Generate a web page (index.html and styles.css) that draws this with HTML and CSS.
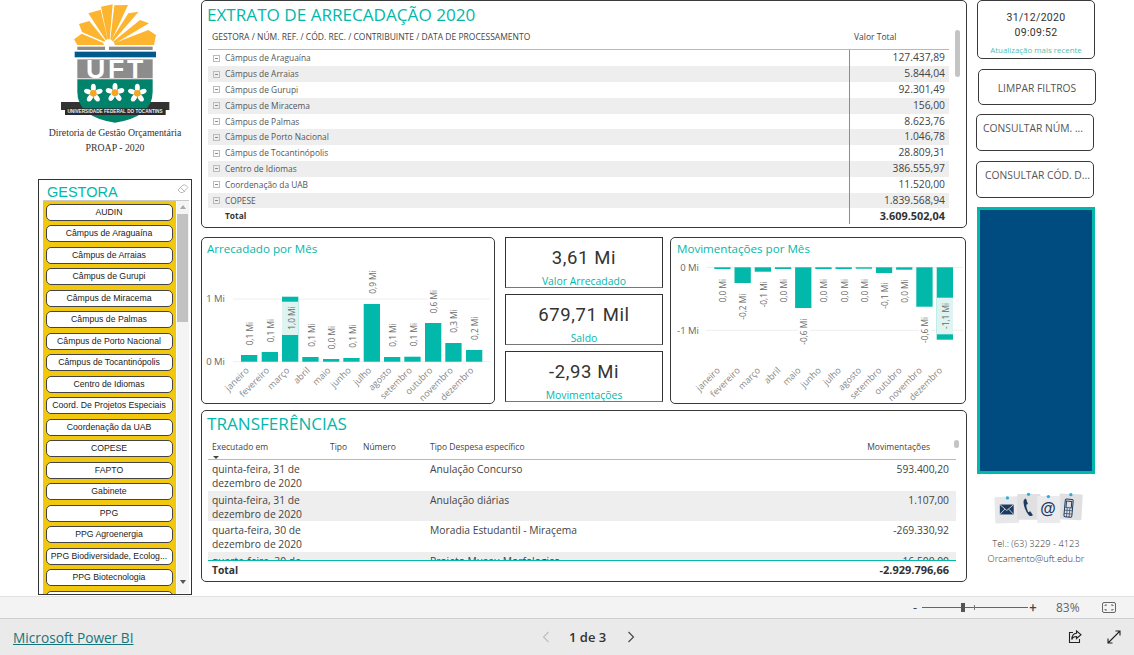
FILE: index.html
```html
<!DOCTYPE html>
<html lang="pt-BR">
<head>
<meta charset="utf-8">
<title>Extrato de Arrecadação 2020</title>
<link rel="stylesheet" href="styles.css">
</head>
<body>
<div class="canvas">
  <aside class="left">
    <svg class="logo" viewBox="180 0 330 372" aria-label="UFT">
      <g fill="#fdb52f">
        <polygon points="222,118 245,101 309,128 312,135 232,135"/>
        <polygon points="237,72 268,63 316,122 312,125 246,96"/>
        <polygon points="265,40 302,29 323,118 317,120"/>
        <polygon points="303,20 338,13 329,118 323,118"/>
        <polygon points="343,16 384,15 335,120 331,118"/>
        <polygon points="385,40 416,35 339,124 334,120"/>
        <polygon points="420,60 447,70 346,130 339,125"/>
        <polygon points="445,90 468,105 462,135 345,135 342,130"/>
      </g>
      <rect x="232" y="140" width="83" height="10" fill="#8c8c8c"/>
      <rect x="327" y="140" width="131" height="10" fill="#8c8c8c"/>
      <rect x="224" y="155" width="244" height="17" fill="#005a8c"/>
      <rect x="232" y="178" width="226" height="57" fill="#8c8c8c"/>
      <text class="logo-uft" x="348" y="235">UFT</text>
      <rect x="183" y="306" width="325" height="24" fill="#333"/>
      <path d="M232 238H458V275Q458 350 345 368Q232 350 232 275Z" fill="#00826b"/>
      <g fill="#fff">
        <g transform="translate(280 280)"><ellipse cy="-17" rx="7.500" ry="12"/><ellipse cy="-17" rx="7.500" ry="12" transform="rotate(72)"/><ellipse cy="-17" rx="7.500" ry="12" transform="rotate(144)"/><ellipse cy="-17" rx="7.500" ry="12" transform="rotate(216)"/><ellipse cy="-17" rx="7.500" ry="12" transform="rotate(288)"/><circle r="10" fill="#f5a623"/></g>
        <g transform="translate(345 278)"><ellipse cy="-17" rx="7.500" ry="12"/><ellipse cy="-17" rx="7.500" ry="12" transform="rotate(72)"/><ellipse cy="-17" rx="7.500" ry="12" transform="rotate(144)"/><ellipse cy="-17" rx="7.500" ry="12" transform="rotate(216)"/><ellipse cy="-17" rx="7.500" ry="12" transform="rotate(288)"/><circle r="10" fill="#f5a623"/></g>
        <g transform="translate(412 280)"><ellipse cy="-17" rx="7.500" ry="12"/><ellipse cy="-17" rx="7.500" ry="12" transform="rotate(72)"/><ellipse cy="-17" rx="7.500" ry="12" transform="rotate(144)"/><ellipse cy="-17" rx="7.500" ry="12" transform="rotate(216)"/><ellipse cy="-17" rx="7.500" ry="12" transform="rotate(288)"/><circle r="10" fill="#f5a623"/></g>
      </g>
      <rect x="195" y="325" width="302" height="20" fill="#2b2b2b"/>
      <text class="logo-band" x="345" y="339">UNIVERSIDADE FEDERAL DO TOCANTINS</text>
    </svg>
    <div class="dept">
      <p>Diretoria de Gestão Orçamentária</p>
      <p>PROAP - 2020</p>
    </div>
    <section class="slicer">
      <header class="slicer-head">
        <h2>GESTORA</h2>
        <svg class="eraser" viewBox="0 0 12 10"><path d="M1 6 6 1h2.5L11 3.5 6 8.5H3.5Z M3.5 3.5 8 8" fill="none" stroke="#aaa" stroke-width=".8"/></svg>
      </header>
      <div class="slicer-body">
        <ul class="slicer-list">
          <li>AUDIN</li>
          <li>Câmpus de Araguaína</li>
          <li>Câmpus de Arraias</li>
          <li>Câmpus de Gurupi</li>
          <li>Câmpus de Miracema</li>
          <li>Câmpus de Palmas</li>
          <li>Câmpus de Porto Nacional</li>
          <li>Câmpus de Tocantinópolis</li>
          <li>Centro de Idiomas</li>
          <li>Coord. De Projetos Especiais</li>
          <li>Coordenação da UAB</li>
          <li>COPESE</li>
          <li>FAPTO</li>
          <li>Gabinete</li>
          <li>PPG</li>
          <li>PPG Agroenergia</li>
          <li>PPG Biodiversidade, Ecolog...</li>
          <li>PPG Biotecnologia</li>
          <li></li>
        </ul>
        <div class="slicer-scroll">
          <span class="arrow-up"></span>
          <span class="slicer-thumb"></span>
          <span class="arrow-down"></span>
        </div>
      </div>
    </section>
  </aside>

  <main class="mid">
    <section class="card extrato">
      <h1 class="big-title">EXTRATO DE ARRECADAÇÃO 2020</h1>
      <span class="v-scroll extrato-scroll"></span>
      <div class="x-head">
        <span>GESTORA / NÚM. REF. / CÓD. REC. / CONTRIBUINTE / DATA DE PROCESSAMENTO</span>
        <span>Valor Total</span>
      </div>
      <div class="x-body">
        <div class="x-row"><span class="x-name"><i class="exp"></i>Câmpus de Araguaína</span><span class="x-val">127.437,89</span></div>
        <div class="x-row"><span class="x-name"><i class="exp"></i>Câmpus de Arraias</span><span class="x-val">5.844,04</span></div>
        <div class="x-row"><span class="x-name"><i class="exp"></i>Câmpus de Gurupi</span><span class="x-val">92.301,49</span></div>
        <div class="x-row"><span class="x-name"><i class="exp"></i>Câmpus de Miracema</span><span class="x-val">156,00</span></div>
        <div class="x-row"><span class="x-name"><i class="exp"></i>Câmpus de Palmas</span><span class="x-val">8.623,76</span></div>
        <div class="x-row"><span class="x-name"><i class="exp"></i>Câmpus de Porto Nacional</span><span class="x-val">1.046,78</span></div>
        <div class="x-row"><span class="x-name"><i class="exp"></i>Câmpus de Tocantinópolis</span><span class="x-val">28.809,31</span></div>
        <div class="x-row"><span class="x-name"><i class="exp"></i>Centro de Idiomas</span><span class="x-val">386.555,97</span></div>
        <div class="x-row"><span class="x-name"><i class="exp"></i>Coordenação da UAB</span><span class="x-val">11.520,00</span></div>
        <div class="x-row"><span class="x-name"><i class="exp"></i>COPESE</span><span class="x-val">1.839.568,94</span></div>
        <div class="x-row x-total"><span class="x-name"><i class="exp-none"></i>Total</span><span class="x-val">3.609.502,04</span></div>
      </div>
    </section>

    <div class="charts">
      <section class="card chart-card chart-a">
        <h3 class="chart-title">Arrecadado por Mês</h3>
        <svg class="chart" viewBox="202 260 292 143">
          <g class="grid"><line x1="233" x2="490" y1="299" y2="299"/><line x1="233" x2="490" y1="361.7" y2="361.7"/></g>
          <text class="axis" x="225" y="302">1 Mi</text>
          <text class="axis" x="225" y="365">0 Mi</text>
          <g class="bars">
            <rect x="241" y="355" width="16.3" height="6.7"/>
            <rect x="261.7" y="352" width="16.3" height="9.7"/>
            <rect x="282" y="296.7" width="16.3" height="65"/>
            <rect x="302.3" y="357" width="16.3" height="4.7"/>
            <rect x="323" y="359" width="16.3" height="2.7"/>
            <rect x="343.3" y="358" width="16.3" height="3.7"/>
            <rect x="363.7" y="304" width="16.3" height="57.7"/>
            <rect x="384" y="357" width="16.3" height="4.7"/>
            <rect x="404.3" y="356.7" width="16.3" height="5"/>
            <rect x="425" y="323" width="16.3" height="38.7"/>
            <rect x="445.3" y="343" width="16.3" height="18.7"/>
            <rect x="466" y="350" width="16.3" height="11.7"/>
          </g>
          <rect class="lbl-bg" x="282" y="301.7" width="16.3" height="33.3"/>
          <rect class="lbl-white" x="428" y="290" width="12" height="23"/>
          <g class="val">
            <text transform="translate(253 333.7) rotate(-90)">0,1 Mi</text>
            <text transform="translate(274 330.7) rotate(-90)">0,1 Mi</text>
            <text transform="translate(294.7 318) rotate(-90)">1,0 Mi</text>
            <text transform="translate(315 335) rotate(-90)">0,1 Mi</text>
            <text transform="translate(335 337.7) rotate(-90)">0,0 Mi</text>
            <text transform="translate(355.7 336) rotate(-90)">0,1 Mi</text>
            <text transform="translate(375.7 282) rotate(-90)">0,9 Mi</text>
            <text transform="translate(396 335) rotate(-90)">0,1 Mi</text>
            <text transform="translate(416.7 334.7) rotate(-90)">0,1 Mi</text>
            <text transform="translate(437 301.7) rotate(-90)">0,6 Mi</text>
            <text transform="translate(457 321) rotate(-90)">0,3 Mi</text>
            <text transform="translate(478 328.3) rotate(-90)">0,2 Mi</text>
          </g>
          <g class="month">
            <text transform="translate(249.500 371) rotate(-45)">janeiro</text>
            <text transform="translate(269.900 371) rotate(-45)">fevereiro</text>
            <text transform="translate(290.200 371) rotate(-45)">março</text>
            <text transform="translate(310.500 371) rotate(-45)">abril</text>
            <text transform="translate(331.200 371) rotate(-45)">maio</text>
            <text transform="translate(351.500 371) rotate(-45)">junho</text>
            <text transform="translate(371.900 371) rotate(-45)">julho</text>
            <text transform="translate(392.200 371) rotate(-45)">agosto</text>
            <text transform="translate(412.500 371) rotate(-45)">setembro</text>
            <text transform="translate(433.200 371) rotate(-45)">outubro</text>
            <text transform="translate(453.500 371) rotate(-45)">novembro</text>
            <text transform="translate(474.200 371) rotate(-45)">dezembro</text>
          </g>
        </svg>
      </section>

      <div class="kpis">
        <section class="kpi"><strong>3,61 Mi</strong><span>Valor Arrecadado</span></section>
        <section class="kpi"><strong>679,71 Mil</strong><span>Saldo</span></section>
        <section class="kpi"><strong>-2,93 Mi</strong><span>Movimentações</span></section>
      </div>

      <section class="card chart-card chart-b">
        <h3 class="chart-title">Movimentações por Mês</h3>
        <svg class="chart" viewBox="671 260 294 143">
          <g class="grid"><line x1="706" x2="963" y1="267.3" y2="267.3"/><line x1="706" x2="963" y1="330.3" y2="330.3"/></g>
          <rect class="lbl-white" x="798" y="320" width="12" height="22"/>
          <rect class="lbl-white" x="919" y="320" width="12" height="22"/>
          <text class="axis" x="699" y="271">0 Mi</text>
          <text class="axis" x="699" y="334">-1 Mi</text>
          <g class="bars">
            <rect x="714.3" y="267.3" width="16.3" height="1.7"/>
            <rect x="734.5" y="267.3" width="16.3" height="15.7"/>
            <rect x="754.7" y="267.3" width="16.3" height="4.4"/>
            <rect x="774.9" y="267.3" width="16.3" height="1.7"/>
            <rect x="795.1" y="267.3" width="16.3" height="40.7"/>
            <rect x="815.3" y="267.3" width="16.3" height="1.7"/>
            <rect x="835.5" y="267.3" width="16.3" height="1.7"/>
            <rect x="855.7" y="267.3" width="16.3" height="1.4"/>
            <rect x="875.9" y="267.3" width="16.3" height="5.7"/>
            <rect x="896.1" y="267.3" width="16.3" height="2.4"/>
            <rect x="916.3" y="267.3" width="16.3" height="39.4"/>
            <rect x="936.7" y="267.3" width="16.3" height="72.4"/>
          </g>
          <rect class="lbl-bg" x="936.7" y="297.7" width="16.3" height="36.6"/>
          <g class="val">
            <text transform="translate(726 290.7) rotate(-90)">0,0 Mi</text>
            <text transform="translate(746 306.7) rotate(-90)">-0,2 Mi</text>
            <text transform="translate(766.7 294.3) rotate(-90)">-0,1 Mi</text>
            <text transform="translate(787 290.7) rotate(-90)">0,0 Mi</text>
            <text transform="translate(807 331.7) rotate(-90)">-0,6 Mi</text>
            <text transform="translate(827.3 290.7) rotate(-90)">0,0 Mi</text>
            <text transform="translate(848 290.7) rotate(-90)">0,0 Mi</text>
            <text transform="translate(868 290.7) rotate(-90)">0,0 Mi</text>
            <text transform="translate(888 295.7) rotate(-90)">-0,1 Mi</text>
            <text transform="translate(908 291) rotate(-90)">0,0 Mi</text>
            <text transform="translate(928 330) rotate(-90)">-0,6 Mi</text>
            <text transform="translate(948.7 316) rotate(-90)">-1,1 Mi</text>
          </g>
          <g class="month">
            <text transform="translate(720.500 371) rotate(-45)">janeiro</text>
            <text transform="translate(740.700 371) rotate(-45)">fevereiro</text>
            <text transform="translate(760.900 371) rotate(-45)">março</text>
            <text transform="translate(781.100 371) rotate(-45)">abril</text>
            <text transform="translate(801.300 371) rotate(-45)">maio</text>
            <text transform="translate(821.500 371) rotate(-45)">junho</text>
            <text transform="translate(841.700 371) rotate(-45)">julho</text>
            <text transform="translate(861.900 371) rotate(-45)">agosto</text>
            <text transform="translate(882.100 371) rotate(-45)">setembro</text>
            <text transform="translate(902.300 371) rotate(-45)">outubro</text>
            <text transform="translate(922.500 371) rotate(-45)">novembro</text>
            <text transform="translate(942.900 371) rotate(-45)">dezembro</text>
          </g>
        </svg>
      </section>
    </div>

    <section class="card transfer">
      <h2 class="big-title">TRANSFERÊNCIAS</h2>
      <span class="v-scroll transfer-scroll"></span>
      <div class="t-row t-head">
        <span>Executado em<i class="sort"></i></span><span>Tipo</span><span>Número</span><span>Tipo Despesa específico</span><span class="t-val t-val-head">Movimentações</span>
      </div>
      <div class="t-body">
        <div class="t-row"><span>quinta-feira, 31 de dezembro de 2020</span><span></span><span></span><span>Anulação Concurso</span><span class="t-val">593.400,20</span></div>
        <div class="t-row"><span>quinta-feira, 31 de dezembro de 2020</span><span></span><span></span><span>Anulação diárias</span><span class="t-val">1.107,00</span></div>
        <div class="t-row"><span>quarta-feira, 30 de dezembro de 2020</span><span></span><span></span><span>Moradia Estudantil - Miraçema</span><span class="t-val">-269.330,92</span></div>
        <div class="t-row"><span>quarta-feira, 30 de dezembro de 2020</span><span></span><span></span><span>Projeto Museu Morfologico</span><span class="t-val">-16.500,00</span></div>
      </div>
      <div class="t-row t-total"><span>Total</span><span></span><span></span><span></span><span class="t-val">-2.929.796,66</span></div>
    </section>
  </main>

  <aside class="right">
    <section class="card date-card">
      <p>31/12/2020</p>
      <p>09:09:52</p>
      <small>Atualização mais recente</small>
    </section>
    <button class="card btn btn-clear">LIMPAR FILTROS</button>
    <button class="card btn btn-a">CONSULTAR NÚM. ...</button>
    <button class="card btn btn-b">CONSULTAR CÓD. D...</button>
    <div class="blue"></div>
    <svg class="contact" viewBox="50 90 290 115" aria-label="Contato">
      <g>
        <rect x="66" y="110" width="72" height="80" rx="3" fill="#e8e8ea" transform="rotate(-2 100 150)"/>
        <rect x="134" y="102" width="70" height="78" rx="3" fill="#e0e0e2"/>
        <rect x="260" y="102" width="70" height="78" rx="3" fill="#e0e0e2" transform="rotate(3 295 140)"/>
        <rect x="194" y="108" width="70" height="82" rx="3" fill="#ebebed"/>
        <circle cx="104" cy="114" r="5" fill="#27aee0"/>
        <circle cx="168" cy="103" r="5" fill="#27aee0"/>
        <circle cx="228" cy="110" r="5" fill="#27aee0"/>
        <circle cx="296" cy="104" r="5" fill="#27aee0"/>
      </g>
      <g fill="#1d3a5f">
        <rect x="81" y="134" width="42" height="30"/>
        <path d="M160 116c-6 2-8 5-7 14 1 12 8 28 17 38 4 2 9 1 11-2l-8-12-6 3c-3-7-6-14-6-22l5-3Z"/>
        <text class="contact-at" x="227" y="164">@</text>
      </g>
      <path d="M81 134 102 152 123 134M81 164 96 148M123 164 108 148" fill="none" stroke="#e8e8ea" stroke-width="2.500"/>
      <g fill="none" stroke="#1d3a5f" stroke-width="3" transform="rotate(5 290 145)">
        <rect x="277" y="118" width="24" height="54" rx="4"/>
        <rect x="281" y="124" width="16" height="20"/>
        <path d="M277 152H301M277 162H301M285 146V172M293 146V172" stroke-width="2"/>
      </g>
    </svg>
    <p class="tel">Tel.: (63) 3229 - 4123</p>
    <p class="mail">Orcamento@uft.edu.br</p>
  </aside>
</div>

<div class="zoombar">
  <span class="zb-btn">-</span>
  <span class="zb-slider"><i class="zb-thumb"></i><i class="zb-tick"></i></span>
  <span class="zb-btn zb-plus">+</span>
  <span class="zb-pct">83%</span>
  <svg class="zb-fit" viewBox="0 0 14 11"><rect x=".5" y=".5" width="13" height="10" rx="1.5" fill="none" stroke="#666"/><path d="M3 4V3h2M9 3h2v1M11 7v1H9M5 8H3V7" fill="none" stroke="#666"/></svg>
</div>

<footer class="footer">
  <a class="pbi" href="#">Microsoft Power BI</a>
  <nav class="pager">
    <svg class="chev" viewBox="0 0 8 12"><path d="M6.5 1 1.5 6l5 5" fill="none" stroke="#bdbdbd" stroke-width="1.1"/></svg>
    <span>1 de 3</span>
    <svg class="chev" viewBox="0 0 8 12"><path d="M1.5 1l5 5-5 5" fill="none" stroke="#444" stroke-width="1.1"/></svg>
  </nav>
  <div class="foot-icons">
    <svg viewBox="0 0 14 14"><path d="M5 2.5H1.5v10h10V9" fill="none" stroke="#222" stroke-width="1.1"/><path d="M8.500 1 13 4.700 8.500 8.500V6.500C6 6.500 4.500 7.500 3.800 9.500 3.800 6 5.500 3.500 8.500 3.200Z" fill="none" stroke="#222" stroke-width="1.1"/></svg>
    <svg viewBox="0 0 14 14"><path d="M8.500 1H13V5.500M13 1 1 13M1 8.500V13H5.500" fill="none" stroke="#222" stroke-width="1.1"/></svg>
  </div>
</footer>
</body>
</html>
```

FILE: styles.css
```css
* { box-sizing: border-box; }
html, body { margin: 0; padding: 0; }
body { width: 1134px; height: 655px; overflow: hidden; background: #fff; font-family: "Open Sans", "Noto Sans", sans-serif; color: #444; }
h1, h2, h3, p, ul { margin: 0; padding: 0; font-weight: 400; }

.canvas { display: flex; height: 596px; overflow: hidden; background: #fff; }

/* left column */
.left { width: 201px; flex: none; padding-left: 38px; }
.logo { display: block; width: 110px; height: 124px; margin-left: 22px; }
.logo-uft { font: 700 80px "Liberation Sans", sans-serif; fill: #fff; text-anchor: middle; letter-spacing: 8px; }
.logo-band { font: 700 14px "Liberation Sans", sans-serif; fill: #eee; text-anchor: middle; }
.dept { width: 154px; padding-top: 1px; text-align: center; font: 700 9.800px/15px "Liberation Serif", serif; color: #333; white-space: nowrap; }
.slicer { width: 154px; height: 416px; margin-top: 24px; border: 1px solid #333; padding: 0 2px 0 4px; overflow: hidden; }
.slicer-head { display: flex; justify-content: space-between; align-items: center; height: 21px; border-bottom: 1px solid #c8c8c8; padding: 4px 0 0 4px; }
.slicer-head h2 { font: 400 14.500px/17px "Liberation Sans", sans-serif; color: #01b8aa; }
.eraser { width: 12px; height: 10px; margin-top: -7px; }
.slicer-body { display: flex; height: 400px; }
.slicer-list { width: 132.500px; flex: none; list-style: none; background: #f2c80f; padding: 2.500px 3px 0 2.500px; display: flex; flex-direction: column; gap: 4.500px; }
.slicer-list li { flex: none; height: 17px; border: 1px solid #444; border-radius: 5px; background: #fff; font: 400 8.700px/15px "Liberation Sans", sans-serif; color: #222; text-align: center; white-space: nowrap; overflow: hidden; }
.slicer-scroll { flex: 1; display: flex; flex-direction: column; align-items: center; background: #f4f4f4; margin-left: 1px; height: 392px; padding: 4px 0; }
.slicer-thumb { display: block; width: 11px; height: 108px; background: #c2c2c2; margin-top: 5px; }
.arrow-up, .arrow-down { display: block; width: 0; height: 0; border-left: 3.500px solid transparent; border-right: 3.500px solid transparent; }
.arrow-up { border-bottom: 4px solid #aaa; }
.arrow-down { border-top: 4px solid #555; margin-top: auto; margin-bottom: 5px; }

/* cards */
.card { position: relative; border: 1px solid #3a3a3a; border-radius: 5px; background: #fff; }
.mid { width: 766px; flex: none; }
.big-title { font-size: 17.100px; line-height: 26px; color: #01b8aa; padding-left: 5px; white-space: nowrap; }
.v-scroll { position: absolute; width: 5px; background: #c4c4c4; border-radius: 3px; }

/* extrato */
.extrato { height: 228px; padding-top: 1px; }
.extrato-scroll { left: 753px; top: 29px; height: 47px; }
.x-head { display: grid; grid-template-columns: 641px 100px; margin-left: 6px; width: 741px; height: 22px; padding-top: 2px; font-size: 8.500px; line-height: 14px; border-bottom: 1px solid #7fd4c8; color: #444; }
.x-head span { white-space: nowrap; }
.x-head span:first-child { padding-left: 4px; }
.x-head span:last-child { padding-left: 5px; }
.x-body { margin-left: 6px; width: 741px; padding-top: .4px; }
.x-row { display: grid; grid-template-columns: 641px 100px; height: 15.800px; font-size: 8.400px; line-height: 15.800px; }
.x-row:nth-child(even) { background: #eee; }
.x-name { display: flex; align-items: center; padding-left: 5px; color: #555; }
.x-val { border-left: 1px solid #35b5a6; text-align: right; padding-right: 4px; font-size: 10.300px; color: #444; }
.exp { position: relative; display: block; width: 7px; height: 7px; border: 1px solid #bbb; margin-right: 5px; }
.exp::after { content: ""; position: absolute; left: 1px; top: 2px; width: 3px; height: 1px; background: #888; }
.exp-none { display: block; width: 12px; }
.x-total { height: 16px; font-weight: 700; }
.x-total .x-name { color: #333; }
.x-total .x-val { color: #333; font-size: 10.900px; }

/* charts */
.charts { display: flex; margin-top: 9px; height: 167px; }
.chart-card { height: 167px; }
.chart-a { width: 294px; }
.chart-b { width: 296px; margin-left: 7px; }
.chart-title { height: 22px; padding: 2px 0 0 5px; font-size: 11.600px; line-height: 17px; color: #01b8aa; white-space: nowrap; }
.chart-b .chart-title { padding-left: 6px; }
.chart { display: block; width: 100%; height: 143px; }
.grid line { stroke: #eee; stroke-width: 1; }
.axis { font-size: 9.500px; fill: #666; text-anchor: end; }
.bars rect { fill: #01b8aa; }
.lbl-bg { fill: #dff3f1; }
.lbl-white { fill: #fff; }
.val text { font-size: 8.300px; fill: #666; text-anchor: middle; }
.month text { font-size: 9px; fill: #888; text-anchor: end; }

.kpis { width: 158px; margin-left: 10px; display: flex; flex-direction: column; gap: 6px; }
.kpi { height: 51px; border: 1px solid #333; border-bottom-color: #777; padding-top: 7px; text-align: center; }
.kpi strong { display: block; font: 400 18.500px/26px Roboto, sans-serif; letter-spacing: .6px; color: #333; }
.kpi span { display: block; margin-top: 3px; font-size: 10.400px; line-height: 14px; color: #01b8aa; }

/* transfer */
.transfer { height: 172px; margin-top: 6px; }
.transfer-scroll { left: 752px; top: 29px; height: 8px; }
.t-row { display: grid; grid-template-columns: 118px 33px 67px 1fr 100px; width: 748px; margin-left: 6px; padding-left: 4px; padding-right: 7px; font-size: 10.300px; line-height: 14px; color: #444; }
.t-head { height: 23px; padding-top: 3px; padding-right: 5px; font-size: 8.500px; border-bottom: 1px solid #7fd4c8; }
.t-head span { position: relative; white-space: nowrap; }
.sort { position: absolute; left: 1px; top: 16px; width: 0; height: 0; border-left: 3px solid transparent; border-right: 3px solid transparent; border-top: 3px solid #444; }
.t-body { height: 100px; overflow: hidden; }
.t-body .t-row { height: 30.500px; padding-top: 2px; }
.t-body .t-row:nth-child(even) { background: #eee; }
.t-val { text-align: right; white-space: nowrap; }
.t-val-head { padding-right: 21px; }
.t-total { height: 21px; border-top: 1px solid #01b8aa; padding-top: 2px; font-weight: 700; color: #333; }
.t-total .t-val { font-size: 11px; }

/* right column */
.right { width: 120px; flex: none; margin-left: 9px; padding-left: 1px; display: flex; flex-direction: column; }
.date-card { width: 118px; height: 59px; padding-top: 9px; text-align: center; font: 400 10.500px/15px Roboto, sans-serif; letter-spacing: .3px; color: #333; }
.date-card small { display: block; margin-top: 4px; font: 400 7.900px/12px "Open Sans", sans-serif; letter-spacing: 0; color: #4fbfb3; white-space: nowrap; }
.btn { display: block; font: 400 10.300px/14px "Open Sans", sans-serif; color: #555; white-space: nowrap; padding: 0; width: 118px; }
.btn-clear { height: 36px; margin: 10px 0 0 1px; padding-top: 2px; text-align: center; }
.btn-a { height: 37px; margin: 9px 0 0 -1px; text-align: left; padding: 0 0 10px 6px; }
.btn-b { height: 37px; margin: 10px 0 0 -1px; text-align: left; padding: 0 0 10px 8px; }
.blue { width: 118px; height: 267px; margin-top: 9px; background: #004b80; border: 3px solid #01b8aa; flex: none; }
.contact { display: block; width: 97px; height: 38px; margin: 16px 0 0 12px; flex: none; }
.contact-at { font: 700 48px "Liberation Sans", sans-serif; text-anchor: middle; }
.tel, .mail { width: 118px; text-align: center; font-weight: 300; font-size: 9.300px; line-height: 15px; color: #333; white-space: nowrap; }
.tel { margin-top: 8px; }

/* zoom bar */
.zoombar { height: 22px; background: #f3f3f3; border-top: 1px solid #e2e2e2; display: flex; align-items: center; padding-left: 911px; color: #555; }
.zb-btn { width: 8px; font: 400 13px/18px Roboto, sans-serif; text-align: center; color: #444; }
.zb-slider { position: relative; width: 106px; height: 1px; margin-left: 3px; background: #666; }
.zb-thumb { position: absolute; left: 39px; top: -4px; width: 4px; height: 9px; background: #555; }
.zb-tick { position: absolute; left: 52px; top: -2px; width: 1px; height: 5px; background: #777; }
.zb-plus { margin-left: 1px; }
.zb-pct { margin-left: 19px; font-size: 12px; color: #666; width: 24px; }
.zb-fit { width: 14px; height: 11px; margin-left: 22px; }

/* footer */
.footer { height: 37px; background: #eaeaea; border-top: 1px solid #cfcfcf; display: flex; align-items: center; padding-left: 13px; position: relative; }
.pbi { width: 121px; font-size: 13.700px; line-height: 18px; color: #17757a; text-decoration: underline; white-space: nowrap; margin-top: 2px; }
.pager { display: flex; align-items: center; margin-left: 408px; font-size: 13px; font-weight: 600; color: #333; }
.pager span { width: 37px; margin: 0 21px 0 19px; white-space: nowrap; }
.chev { width: 8px; height: 12px; }
.foot-icons { display: flex; gap: 25px; margin-left: 433px; }
.foot-icons svg { width: 14px; height: 14px; }
```
